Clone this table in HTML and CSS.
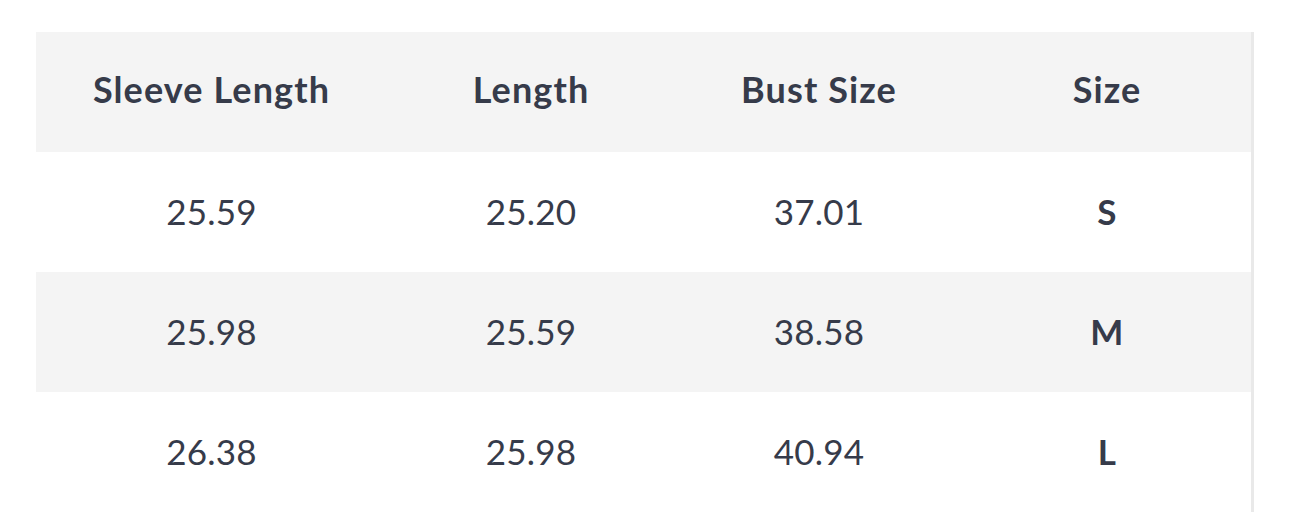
FILE: index.html
```html
<!DOCTYPE html>
<html>
<head>
<meta charset="utf-8">
<link rel="stylesheet" href="styles.css">
</head>
<body>
<div class="wrap">
  <table class="size-table">
    <colgroup>
      <col class="c1"><col class="c2"><col class="c3"><col class="c4">
    </colgroup>
    <thead>
      <tr><th>Sleeve Length</th><th>Length</th><th>Bust Size</th><th>Size</th></tr>
    </thead>
    <tbody>
      <tr><td>25.59</td><td>25.20</td><td>37.01</td><td class="sz">S</td></tr>
      <tr><td>25.98</td><td>25.59</td><td>38.58</td><td class="sz">M</td></tr>
      <tr><td>26.38</td><td>25.98</td><td>40.94</td><td class="sz">L</td></tr>
    </tbody>
  </table>
</div>
</body>
</html>
```

FILE: styles.css
```css
html, body {
  margin: 0;
  padding: 0;
  background: #ffffff;
}
body {
  font-family: Lato, "Noto Sans", sans-serif;
  color: #363b4a;
}
.wrap {
  margin: 32px 0 0 36px;
  width: 1215px;
  border-right: 3px solid #e9e9e9;
}
.size-table {
  width: 1215px;
  border-collapse: collapse;
  table-layout: fixed;
}
.c1 { width: 351px; }
.c2 { width: 288px; }
.c3 { width: 288px; }
.c4 { width: 288px; }
.size-table th,
.size-table td {
  box-sizing: border-box;
  height: 120px;
  padding: 0;
  text-align: center;
  vertical-align: middle;
}
.size-table th {
  font-size: 36px;
  letter-spacing: 1.1px;
  font-weight: 700;
  background: #f4f4f4;
  padding-bottom: 6px;
}
.size-table td {
  font-size: 35px;
  letter-spacing: 0.2px;
  font-weight: 400;
  padding-bottom: 2px;
}
.size-table td.sz {
  font-weight: 700;
}
.size-table tbody tr:nth-child(even) td {
  background: #f4f4f4;
}
```
